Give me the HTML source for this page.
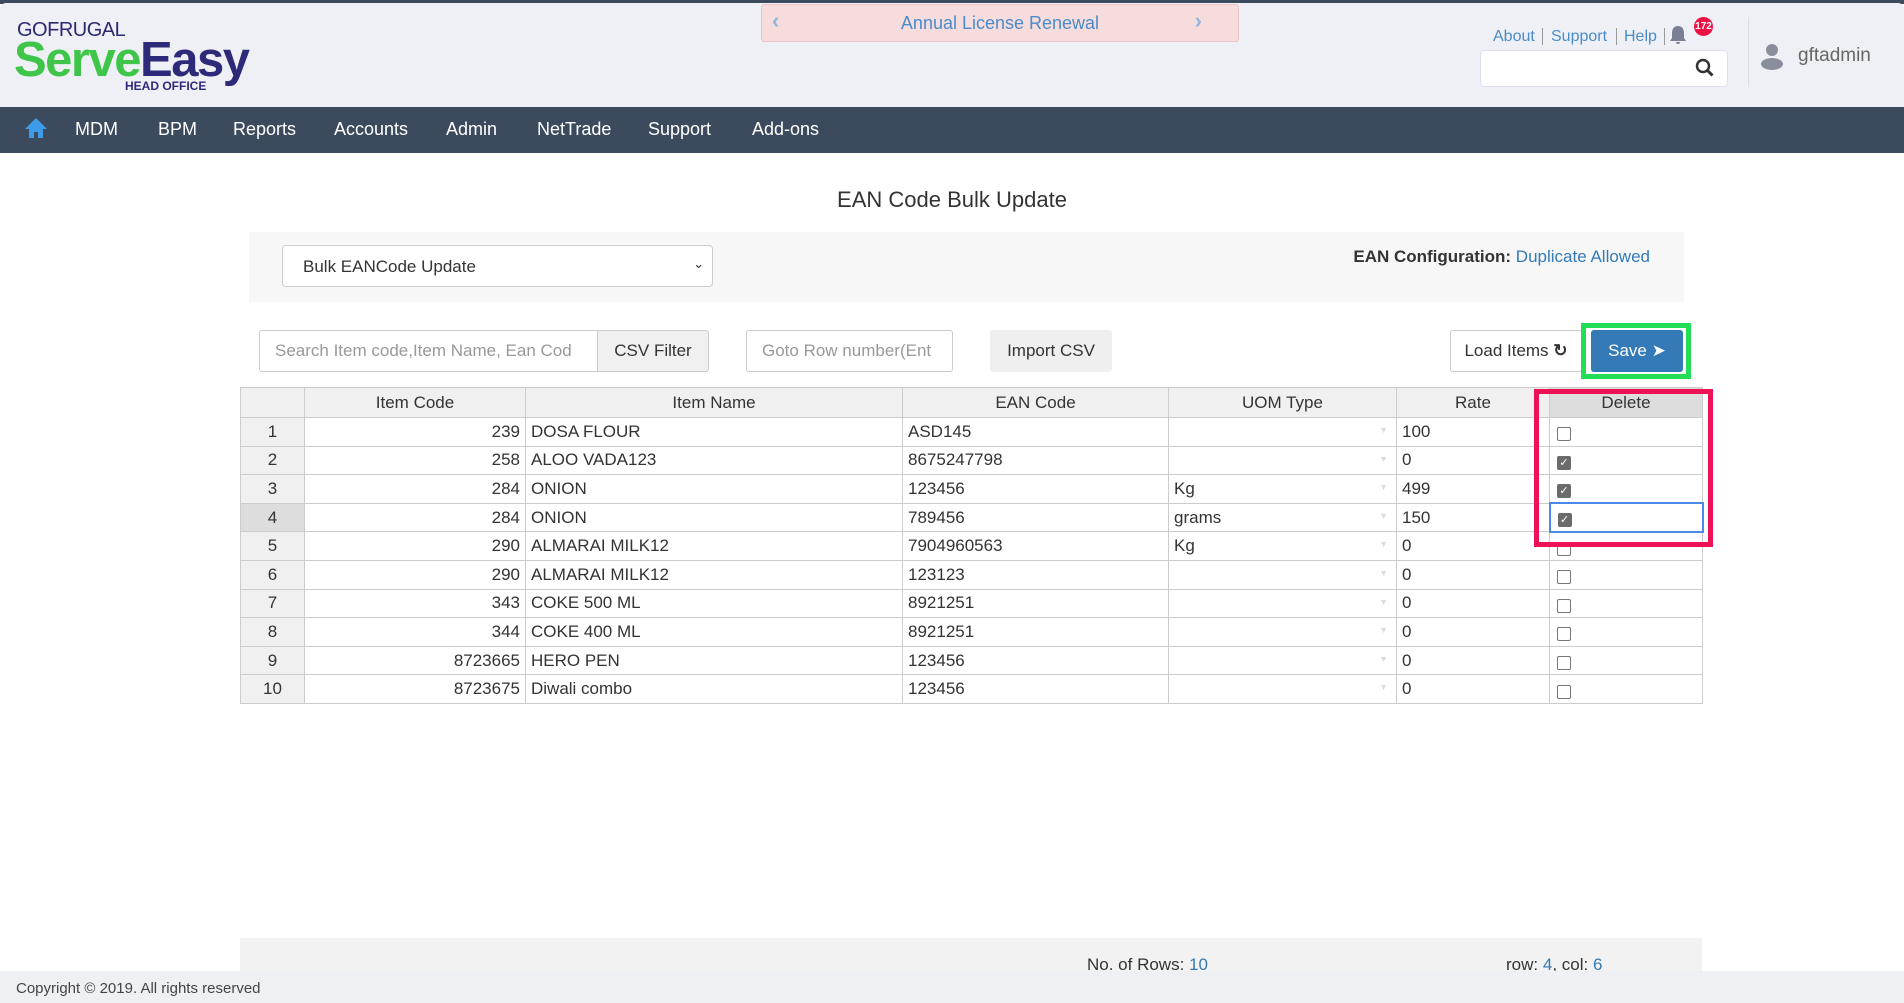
<!DOCTYPE html>
<html><head><meta charset="utf-8"><style>
*{box-sizing:border-box;margin:0;padding:0}
body{width:1904px;height:1003px;overflow:hidden;background:#fff;font-family:"Liberation Sans",Arial,sans-serif;position:relative;color:#333}
.abs{position:absolute}
#top{left:0;top:0;width:1904px;height:4px;background:#3c4a5e}
#hdr{left:0;top:3px;width:1904px;height:104px;background:#eff0f6;border-radius:6px 6px 0 0}
#nav{left:0;top:107px;width:1904px;height:46px;background:#3c4a5e}
.nv{position:absolute;top:119px;color:#fff;font-size:18px}
.tl{position:absolute;font-size:16px;color:#4a8cc9}
table{position:absolute;left:240px;top:387px;border-collapse:collapse;font-size:17px;color:#333}
td,th{border:1px solid #ccc;height:28.6px;padding:0 5px;white-space:nowrap;overflow:hidden}
th{background:#f0f0f0;font-weight:normal;height:30px;text-align:center}
td.n{background:#f0f0f0;text-align:center}
td.r{text-align:right}
td.u{position:relative}
td.u:after{content:"▼";position:absolute;right:8px;top:7px;font-size:9px;color:#ddd}
.cb{display:inline-block;width:14px;height:14px;border:1px solid #777;border-radius:2px;margin-left:2px;margin-top:4px;vertical-align:middle;background:#fff}
.cb.on{background:#6b6b6b;border-color:#6b6b6b;color:#fff;font-size:11px;line-height:13px;text-align:center}
.btn{position:absolute;top:330px;height:42px;font-size:17px;display:flex;align-items:center;justify-content:center;border-radius:3px}
</style></head><body>
<div class="abs" id="top"></div>
<div class="abs" id="hdr"></div>
<div class="abs" style="left:17px;top:19px;font-size:20px;color:#2b2a6e;letter-spacing:-0.5px">GOFRUGAL</div>
<div class="abs" style="left:14px;top:34px;font-size:49px;font-weight:bold;letter-spacing:-1.5px;line-height:52px"><span style="color:#3fc64a">Serve</span><span style="color:#2d2a7a">Easy</span></div>
<div class="abs" style="left:125px;top:79px;font-size:12px;font-weight:bold;color:#2d2a7a">HEAD OFFICE</div>
<div class="abs" style="left:761px;top:4px;width:478px;height:38px;background:#f6dcdc;border:1px solid #efc4c4;border-radius:3px;color:#4a8cc9;font-size:18px;text-align:center;line-height:36px">Annual License Renewal
<span style="position:absolute;left:10px;top:-2px;color:#8fb6dc;font-size:22px;font-weight:bold">‹</span><span style="position:absolute;right:36px;top:-2px;color:#8fb6dc;font-size:22px;font-weight:bold">›</span></div>
<div class="tl" style="left:1493px;top:28px">About</div>
<div class="abs" style="left:1542px;top:28px;width:1px;height:17px;background:#999"></div>
<div class="tl" style="left:1551px;top:28px">Support</div>
<div class="abs" style="left:1616px;top:28px;width:1px;height:17px;background:#999"></div>
<div class="tl" style="left:1624px;top:28px">Help</div>
<div class="abs" style="left:1664px;top:28px;width:1px;height:17px;background:#999"></div>
<svg class="abs" style="left:1669px;top:25px" width="18" height="20" viewBox="0 0 18 20"><path d="M9 1c-4 0-6 3-6 7v5l-2 3h16l-2-3V8c0-4-2-7-6-7z M7 17a2 2 0 0 0 4 0z" fill="#7a7f96"/></svg>
<div class="abs" style="left:1694px;top:17px;width:19px;height:19px;border-radius:50%;background:#ee1144;color:#fff;font-size:10px;font-weight:bold;text-align:center;line-height:19px">172</div>
<div class="abs" style="left:1480px;top:50px;width:248px;height:37px;background:#fff;border:1px solid #dde;border-radius:4px"></div>
<svg class="abs" style="left:1695px;top:58px" width="20" height="20" viewBox="0 0 20 20"><circle cx="8" cy="8" r="6" stroke="#333" stroke-width="2.5" fill="none"/><path d="M12.5 12.5l5 5" stroke="#333" stroke-width="3"/></svg>
<div class="abs" style="left:1748px;top:17px;width:1px;height:70px;background:#dcdde6"></div>
<svg class="abs" style="left:1760px;top:42px" width="24" height="28" viewBox="0 0 24 28"><circle cx="12" cy="8" r="6" fill="#8a8d9c"/><ellipse cx="12" cy="22" rx="11" ry="6" fill="#8a8d9c"/></svg>
<div class="abs" style="left:1798px;top:45px;font-size:19px;color:#666">gftadmin</div>
<div class="abs" id="nav"></div>
<svg class="abs" style="left:24px;top:116px" width="24" height="24" viewBox="0 0 24 24"><path d="M12 2L1 13h4v9h5v-6h4v6h5v-9h4z" fill="#3d9be9"/></svg>
<div class="nv" style="left:75px">MDM</div><div class="nv" style="left:158px">BPM</div><div class="nv" style="left:233px">Reports</div><div class="nv" style="left:334px">Accounts</div><div class="nv" style="left:446px">Admin</div><div class="nv" style="left:537px">NetTrade</div><div class="nv" style="left:648px">Support</div><div class="nv" style="left:752px">Add-ons</div>
<div class="abs" style="left:0;width:1904px;top:187px;text-align:center;font-size:22px;color:#333">EAN Code Bulk Update</div>
<div class="abs" style="left:249px;top:232px;width:1435px;height:70px;background:#f7f7f7"></div>
<div class="abs" style="left:282px;top:245px;width:431px;height:42px;background:#fff;border:1px solid #ccc;border-radius:4px;font-size:17px;padding:11px 20px;color:#333">Bulk EANCode Update<span style="position:absolute;right:8px;top:10px;font-size:13px">⌄</span></div>
<div class="abs" style="right:254px;top:247px;font-size:17px"><b>EAN Configuration:</b> <span style="color:#337ab7">Duplicate Allowed</span></div>
<div class="btn" style="left:259px;width:339px;border:1px solid #ccc;background:#fff;justify-content:flex-start;padding-left:15px;color:#999;border-radius:3px 0 0 3px">Search Item code,Item Name, Ean Cod</div>
<div class="btn" style="left:597px;width:112px;border:1px solid #ccc;background:#f0f0f0;border-radius:0 3px 3px 0;color:#333">CSV Filter</div>
<div class="btn" style="left:746px;width:207px;border:1px solid #ccc;background:#fff;justify-content:flex-start;padding-left:15px;color:#999">Goto Row number(Ent</div>
<div class="btn" style="left:990px;width:122px;background:#efefef;color:#333">Import CSV</div>
<div class="btn" style="left:1450px;width:132px;border:1px solid #ccc;background:#fff;color:#333">Load Items&nbsp;<b>↻</b></div>
<div class="abs" style="left:1581px;top:323px;width:110px;height:56px;border:5px solid #22dd55"></div>
<div class="btn" style="left:1591px;width:92px;background:#337ab7;color:#fff">Save ➤</div>
<table>
<colgroup><col style="width:64px"><col style="width:221px"><col style="width:377px"><col style="width:266px"><col style="width:228px"><col style="width:153px"><col style="width:153px"></colgroup>
<tr><th></th><th>Item Code</th><th>Item Name</th><th>EAN Code</th><th>UOM Type</th><th>Rate</th><th style="background:#ddd">Delete</th></tr>
<tr><td class="n">1</td><td class="r">239</td><td>DOSA FLOUR</td><td>ASD145</td><td class="u"></td><td>100</td><td><span class="cb"></span></td></tr>
<tr><td class="n">2</td><td class="r">258</td><td>ALOO VADA123</td><td>8675247798</td><td class="u"></td><td>0</td><td><span class="cb on">✓</span></td></tr>
<tr><td class="n">3</td><td class="r">284</td><td>ONION</td><td>123456</td><td class="u">Kg</td><td>499</td><td><span class="cb on">✓</span></td></tr>
<tr><td class="n" style="background:#ddd">4</td><td class="r">284</td><td>ONION</td><td>789456</td><td class="u">grams</td><td>150</td><td style="border:2px solid #4b89e8"><span class="cb on">✓</span></td></tr>
<tr><td class="n">5</td><td class="r">290</td><td>ALMARAI MILK12</td><td>7904960563</td><td class="u">Kg</td><td>0</td><td><span class="cb"></span></td></tr>
<tr><td class="n">6</td><td class="r">290</td><td>ALMARAI MILK12</td><td>123123</td><td class="u"></td><td>0</td><td><span class="cb"></span></td></tr>
<tr><td class="n">7</td><td class="r">343</td><td>COKE 500 ML</td><td>8921251</td><td class="u"></td><td>0</td><td><span class="cb"></span></td></tr>
<tr><td class="n">8</td><td class="r">344</td><td>COKE 400 ML</td><td>8921251</td><td class="u"></td><td>0</td><td><span class="cb"></span></td></tr>
<tr><td class="n">9</td><td class="r">8723665</td><td>HERO PEN</td><td>123456</td><td class="u"></td><td>0</td><td><span class="cb"></span></td></tr>
<tr><td class="n">10</td><td class="r">8723675</td><td>Diwali combo</td><td>123456</td><td class="u"></td><td>0</td><td><span class="cb"></span></td></tr>
</table>
<div class="abs" style="left:1534px;top:389px;width:179px;height:158px;border:5px solid #ee1155"></div>
<div class="abs" style="left:240px;top:938px;width:1462px;height:34px;background:#f2f2f2"></div>
<div class="abs" style="left:1087px;top:955px;font-size:17px">No. of Rows: <span style="color:#337ab7">10</span></div>
<div class="abs" style="left:1506px;top:955px;font-size:17px">row: <span style="color:#337ab7">4</span>, col: <span style="color:#337ab7">6</span></div>
<div class="abs" style="left:0;top:971px;width:1904px;height:32px;background:#eff0f3"></div>
<div class="abs" style="left:16px;top:980px;font-size:15px;color:#444">Copyright © 2019. All rights reserved</div>
</body></html>
